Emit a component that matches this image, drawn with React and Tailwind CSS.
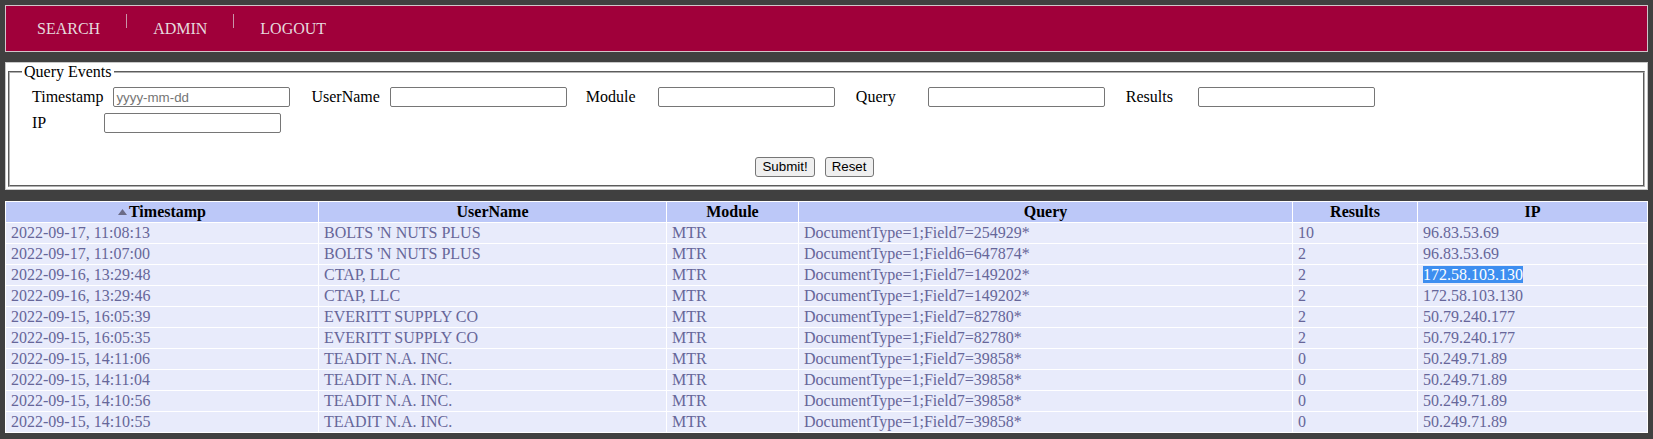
const rows = [
  ['2022-09-17, 11:08:13', "BOLTS 'N NUTS PLUS", 'MTR', 'DocumentType=1;Field7=254929*', '10', '96.83.53.69'],
  ['2022-09-17, 11:07:00', "BOLTS 'N NUTS PLUS", 'MTR', 'DocumentType=1;Field6=647874*', '2', '96.83.53.69'],
  ['2022-09-16, 13:29:48', 'CTAP, LLC', 'MTR', 'DocumentType=1;Field7=149202*', '2', '172.58.103.130', true],
  ['2022-09-16, 13:29:46', 'CTAP, LLC', 'MTR', 'DocumentType=1;Field7=149202*', '2', '172.58.103.130'],
  ['2022-09-15, 16:05:39', 'EVERITT SUPPLY CO', 'MTR', 'DocumentType=1;Field7=82780*', '2', '50.79.240.177'],
  ['2022-09-15, 16:05:35', 'EVERITT SUPPLY CO', 'MTR', 'DocumentType=1;Field7=82780*', '2', '50.79.240.177'],
  ['2022-09-15, 14:11:06', 'TEADIT N.A. INC.', 'MTR', 'DocumentType=1;Field7=39858*', '0', '50.249.71.89'],
  ['2022-09-15, 14:11:04', 'TEADIT N.A. INC.', 'MTR', 'DocumentType=1;Field7=39858*', '0', '50.249.71.89'],
  ['2022-09-15, 14:10:56', 'TEADIT N.A. INC.', 'MTR', 'DocumentType=1;Field7=39858*', '0', '50.249.71.89'],
  ['2022-09-15, 14:10:55', 'TEADIT N.A. INC.', 'MTR', 'DocumentType=1;Field7=39858*', '0', '50.249.71.89'],
]

const fields = [
  { label: 'Timestamp', placeholder: 'yyyy-mm-dd' },
  { label: 'UserName' },
  { label: 'Module', extra: '-ml-[2px]' },
  { label: 'Query' },
  { label: 'Results' },
  { label: 'IP' },
]

function Field({ label, placeholder, extra = '' }) {
  return (
    <div className={`flex items-center mr-[21px] ${extra}`}>
      <span className="inline-block min-w-[62px] mr-[10px] leading-[18px]">{label}</span>
      <input
        type="text"
        placeholder={placeholder}
        className="w-[177px] h-[20px] border border-[#767676] rounded-[2px] px-[2px] bg-white text-[13.33px] font-['Liberation_Sans',Arial,sans-serif] placeholder:text-[#757575] outline-none"
      />
    </div>
  )
}

function Btn({ children }) {
  return (
    <button className="h-[20px] px-[6px] bg-[#efefef] border border-[#767676] rounded-[3px] text-[13.33px] leading-[16px] text-black font-['Liberation_Sans',Arial,sans-serif]">
      {children}
    </button>
  )
}

export default function App() {
  const heads = [
    { t: 'Timestamp', w: 'w-[312px]', sort: true },
    { t: 'UserName', w: 'w-[347px]' },
    { t: 'Module', w: 'w-[131px]' },
    { t: 'Query', w: 'w-[493px]' },
    { t: 'Results', w: 'w-[124px]' },
    { t: 'IP', w: '' },
  ]

  return (
    <div className="min-h-[439px] bg-[#404040] px-[5px] pt-[5px] pb-[5px] font-['Liberation_Serif','Times_New_Roman',serif] text-[16px]">
      {/* Nav */}
      <div className="h-[47px] bg-[#a0003a] border border-[#d2c4ca] flex items-start pl-[31px] pt-[14px] text-[#e6dade] leading-[18px]">
        <span>SEARCH</span>
        <span className="w-[1px] h-[14px] mt-[-6px] mx-[26px] bg-[#c995a8]" />
        <span>ADMIN</span>
        <span className="w-[1px] h-[14px] mt-[-6px] mx-[26px] bg-[#c995a8]" />
        <span>LOGOUT</span>
      </div>

      {/* Query form */}
      <div className="mt-[10px] bg-white border border-[#c8c8c8] px-[2px] pb-[2px]">
        <fieldset className="border-2 [border-style:groove] border-[#b0b0b0] px-[22px] pt-[6px] pb-[8px] text-black">
          <legend className="px-[2px] ml-[-10px] leading-[18px]">Query Events</legend>
          <div className="flex flex-wrap gap-y-[6px]">
            {fields.map((f) => (
              <Field key={f.label} {...f} />
            ))}
          </div>
          <div className="flex justify-center gap-[10px] mt-[24px] pr-[24px]">
            <Btn>Submit!</Btn>
            <Btn>Reset</Btn>
          </div>
        </fieldset>
      </div>

      {/* Results */}
      <table className="mt-[11px] w-full table-fixed border-separate border-spacing-[1px] bg-white">
        <thead>
          <tr>
            {heads.map((h) => (
              <th key={h.t} className={`${h.w} bg-[#bcc8f8] text-black font-bold text-center py-[1px] leading-[18px]`}>
                {h.sort && (
                  <svg width="9" height="6" viewBox="0 0 9 6" className="inline-block mr-[2px] mb-[3px]">
                    <path d="M0 6 L4.5 0 L9 6 Z" fill="#6b6b86" />
                  </svg>
                )}
                {h.t}
              </th>
            ))}
          </tr>
        </thead>
        <tbody>
          {rows.map((r, i) => (
            <tr key={i}>
              {r.slice(0, 6).map((c, j) => (
                <td key={j} className="bg-[#e8ebfb] text-[#666699] pl-[5px] py-[1px] leading-[18px] whitespace-nowrap overflow-hidden">
                  {j === 5 && r[6] ? <span className="bg-[#3d8ef0] text-white">{c}</span> : c}
                </td>
              ))}
            </tr>
          ))}
        </tbody>
      </table>
    </div>
  )
}
